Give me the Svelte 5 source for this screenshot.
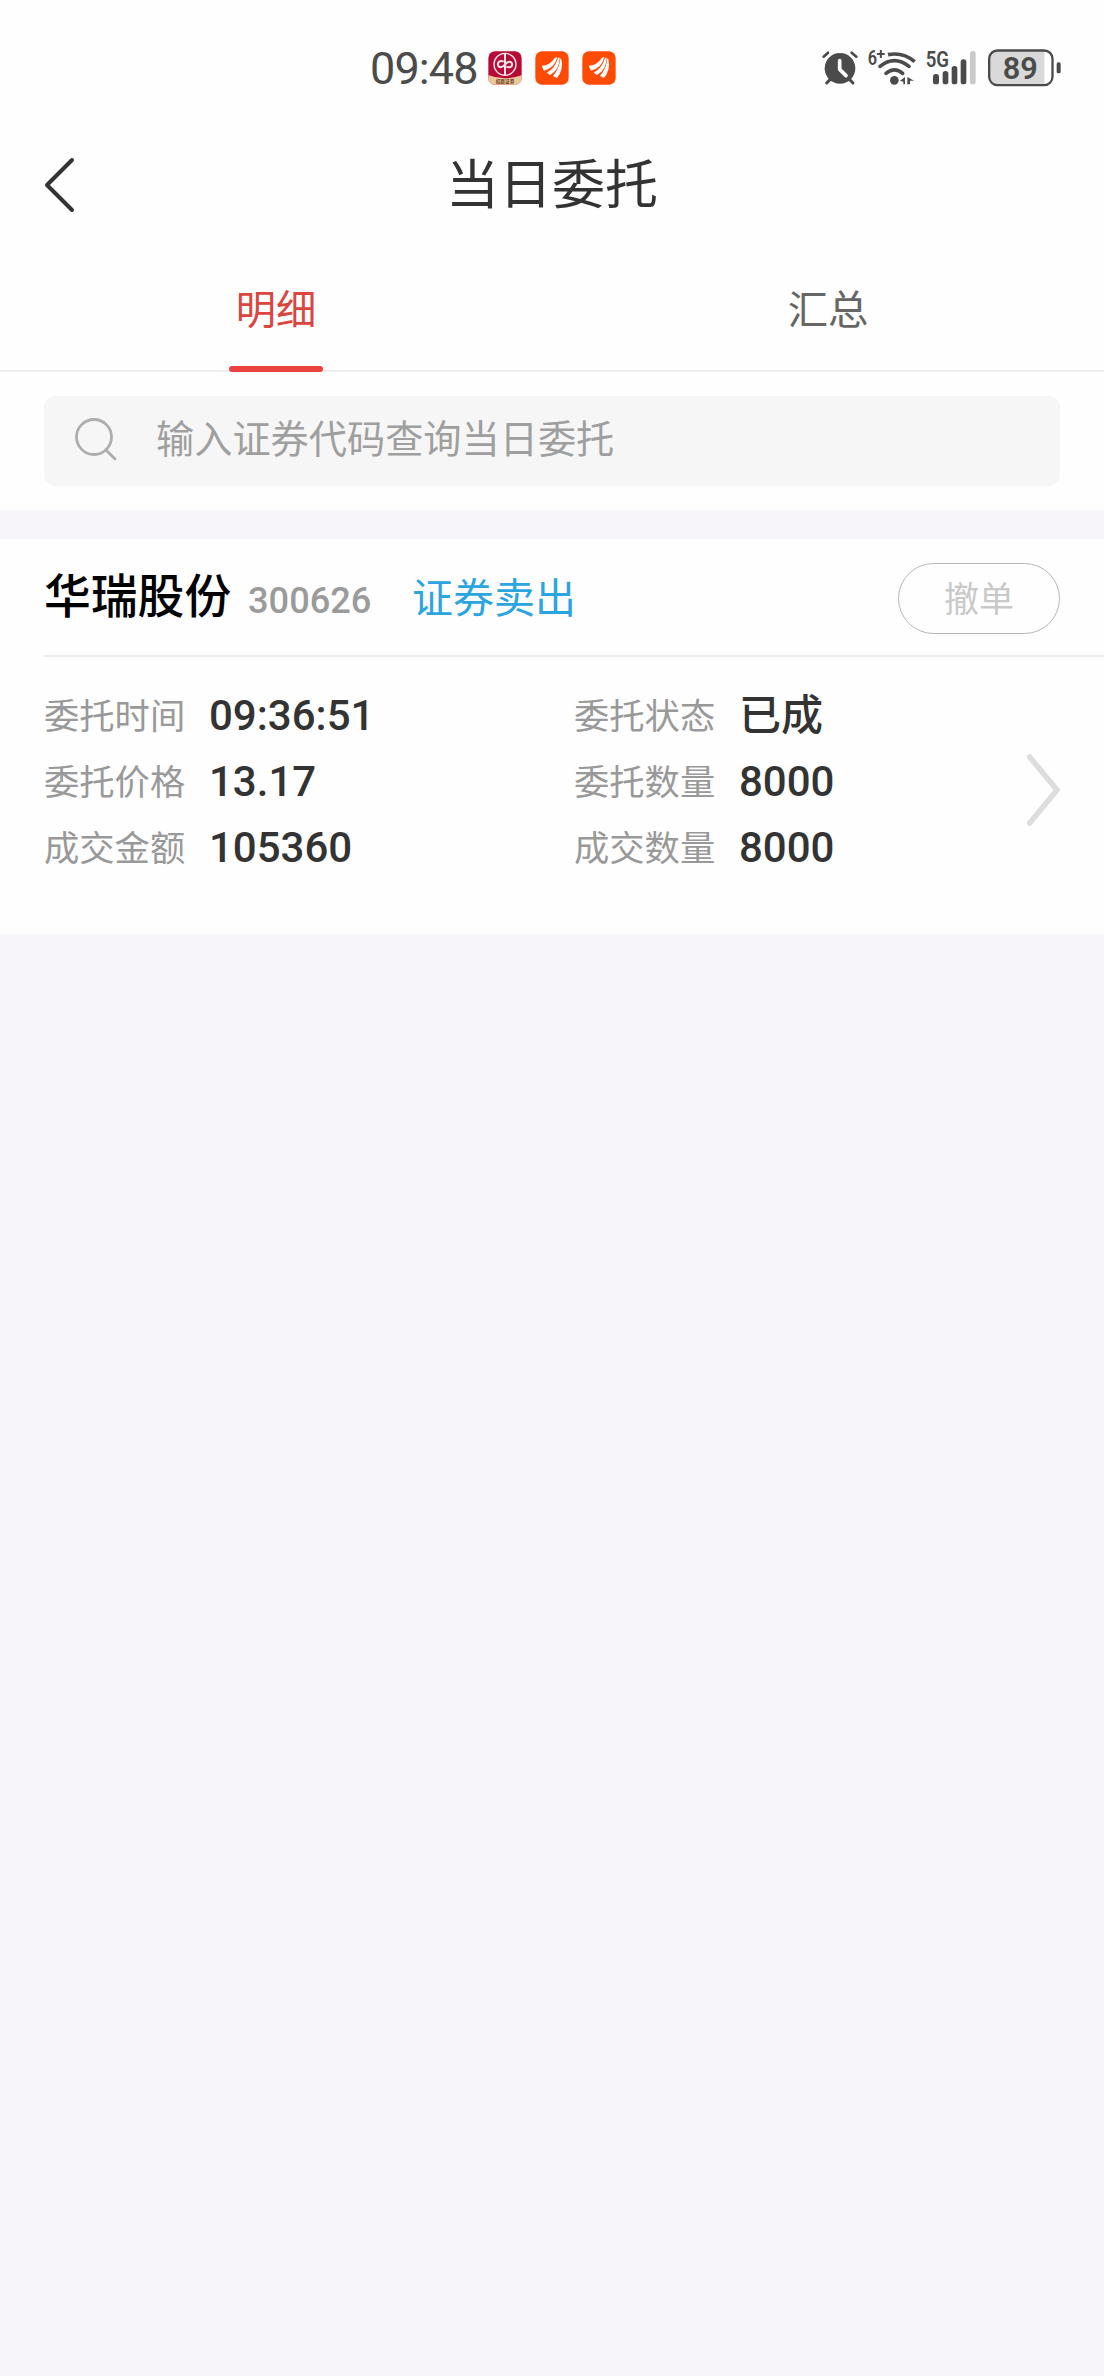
<script>
  const tabs = [
    { label: '明细', active: true },
    { label: '汇总', active: false },
  ];
  const fields = [
    ['委托时间', '09:36:51'],
    ['委托状态', '已成'],
    ['委托价格', '13.17'],
    ['委托数量', '8000'],
    ['成交金额', '105360'],
    ['成交数量', '8000'],
  ];
</script>

{#snippet wingApp()}
  <svg class="app" viewBox="0 0 102 102">
    <rect x="1" y="1" width="100" height="100" rx="20" fill="#fe4a02" />
    <path d="M20 44Q44 44 60 20L67 18Q60 50 27 59Z" fill="#fff" />
    <path d="M35 65Q60 52 69 20L74 20Q74 56 45 72Z" fill="#fff" />
    <path d="M54 75Q74 52 76 22L79 25Q87 55 66 81Z" fill="#fff" />
  </svg>
{/snippet}

<main>
  <div class="status">
    <span class="clock">09:48</span>
    <div class="apps">
      <svg class="app" viewBox="0 0 102 102">
        <defs><clipPath id="tile"><rect x="1" y="1" width="100" height="100" rx="20" /></clipPath></defs>
        <g clip-path="url(#tile)">
          <rect width="102" height="102" fill="#b70a34" />
          <path d="M0 72Q51 92 102 72V102H0Z" fill="#ecc99b" />
          <g fill="none" stroke="#fbe6ee">
            <circle cx="51" cy="40" r="33" stroke-width="4" />
            <path d="M51 8V72" stroke-width="6" />
            <path d="M47 32C36 26 28 34 30 42C32 51 43 51 51 41C59 29 70 30 72 38C74 47 65 52 55 47" stroke-width="6" />
          </g>
        </g>
        <text x="51" y="97" text-anchor="middle" font-size="14" font-weight="700" fill="#6b3a22">招商证券</text>
      </svg>
      {@render wingApp()}
      {@render wingApp()}
    </div>
    <svg class="indicators" viewBox="30 20 726 120">
      <g fill="none" stroke="#4b4b4b" stroke-linecap="round">
        <path d="M38 49L51 37M122 37L136 49" stroke-width="8" />
        <path d="M57 118L47 128M116 118L126 128" stroke-width="9" />
        <path d="M231 43Q276 34 311 64" stroke-width="11" stroke-linecap="butt" />
        <path d="M207 78Q250 44 294 78" stroke-width="11" />
        <path d="M225 99Q250 78 275 99" stroke-width="11" />
      </g>
      <circle cx="87" cy="84" r="46" fill="#4b4b4b" />
      <path d="M86 61V87L105 106" fill="none" stroke="#fff" stroke-width="11" stroke-linecap="round" stroke-linejoin="round" />
      <circle cx="250" cy="120" r="13" fill="#4b4b4b" />
      <path d="M267 121L282 110V132H277V124ZM289 110L309 121H297V132H289Z" fill="#4b4b4b" />
      <text x="170" y="75" font-size="60" font-weight="600" textLength="28" lengthAdjust="spacingAndGlyphs">6</text>
      <path d="M198 41H221M209.500 29V53" stroke="#4b4b4b" stroke-width="6" />
      <text x="344" y="81" font-size="67" font-weight="600" textLength="70" lengthAdjust="spacingAndGlyphs">5G</text>
      <g fill="#4b4b4b">
        <rect x="366" y="101" width="18" height="31" rx="8" />
        <rect x="395" y="92" width="17" height="40" rx="8" />
        <rect x="422" y="77" width="17" height="55" rx="8" />
        <rect x="449" y="57" width="17" height="75" rx="8" />
        <rect x="477" y="32" width="17" height="100" rx="8" fill="#c9c9c9" />
        <rect x="737" y="66" width="12" height="33" rx="5" />
      </g>
      <path d="M556 32H700V134H556Q536 134 536 114V52Q536 32 556 32Z" fill="#d9d9d9" />
      <rect x="534.500" y="30.500" width="190" height="104" rx="25" fill="none" stroke="#4b4b4b" stroke-width="7" />
      <text x="628" y="115" font-size="92" font-weight="600" text-anchor="middle">89</text>
    </svg>
  </div>

  <header>
    <svg class="back" viewBox="0 0 34 58"><path d="M29 4L4 29L29 54" /></svg>
    <h1>当日委托</h1>
  </header>

  <nav>
    {#each tabs as tab}
      <button class="tab" class:active={tab.active}>{tab.label}</button>
    {/each}
  </nav>

  <div class="search-area">
    <label class="search">
      <svg viewBox="0 0 44 44"><circle cx="19" cy="19" r="17.500" /><path d="M31 32L40 41" /></svg>
      <span>输入证券代码查询当日委托</span>
    </label>
  </div>

  <section class="order">
    <div class="order-head">
      <strong>华瑞股份</strong>
      <span class="code">300626</span>
      <span class="side">证券卖出</span>
      <button class="cancel">撤单</button>
    </div>
    <div class="order-body">
      <div class="fields">
        {#each fields as [name, value]}
          <div class="field"><span>{name}</span><b>{value}</b></div>
        {/each}
      </div>
      <svg class="more" viewBox="0 0 33 72"><path d="M1 1L30 36L1 71" /></svg>
    </div>
  </section>
</main>

<style>
  :global(body) { background: #f7f5f9; }
  main {
    width: 1104px;
    min-height: 2376px;
    background: #f7f5f9;
    color: #333;
    font-family: Roboto, "Noto Sans CJK SC", sans-serif;
  }
  svg { display: block; flex: none; }
  button { padding: 0; border: 0; background: none; font: inherit; }
  .status {
    box-sizing: border-box;
    height: 130px;
    padding: 6px 41px 0 370px;
    display: flex;
    align-items: center;
    background: #fefefe;
  }
  .clock { width: 118px; font-size: 45px; letter-spacing: -0.9px; color: #4b4b4b; }
  .apps { display: flex; gap: 13px; }
  .app { width: 34px; height: 34px; }
  .indicators { width: 242px; height: 40px; margin-left: auto; margin-top: -3px; fill: #4b4b4b; }
  header {
    box-sizing: border-box;
    height: 110px;
    padding: 0 43px;
    display: grid;
    grid-template-columns: 34px 1fr 34px;
    align-items: center;
    background: #fefefe;
  }
  .back { width: 34px; height: 58px; fill: none; stroke: #333; stroke-width: 4; stroke-linecap: round; stroke-linejoin: round; }
  h1 { margin: 0; padding-top: 2px; text-align: center; font-size: 53px; line-height: 108px; font-weight: 400; }
  nav {
    height: 130px;
    display: grid;
    grid-template-columns: 1fr 1fr;
    justify-items: center;
    background: #fefefe;
    border-bottom: 2px solid #ededed;
  }
  .tab {
    box-sizing: border-box;
    width: 94px;
    height: 132px;
    padding-top: 41px;
    display: flex;
    flex-direction: column;
    align-items: center;
    justify-content: space-between;
    font-size: 40.300px;
    line-height: 60px;
    color: #666;
  }
  .tab.active { color: #db4540; }
  .tab.active::after { content: ""; width: 94px; height: 6px; border-radius: 3px; background: #ea4340; }
  .search-area { padding: 24px 44px; background: #fefefe; }
  .search {
    height: 90px;
    padding-left: 31px;
    border-radius: 11px;
    display: flex;
    align-items: center;
    gap: 37px;
    background: #f6f6f6;
    color: #9f9f9f;
    font-size: 38.200px;
  }
  .search span { margin-top: -9px; }
  .search svg { width: 44px; height: 44px; margin-top: -2px; fill: none; stroke: #adadad; stroke-width: 2.800; stroke-linecap: round; }
  .order { box-sizing: border-box; height: 395px; margin-top: 29px; background: #fefefe; }
  .order-head {
    box-sizing: border-box;
    height: 118px;
    margin-left: 44px;
    padding-right: 44px;
    display: flex;
    align-items: center;
    border-bottom: 2px solid #ececec;
  }
  .order-head strong { width: 204px; margin-top: -9px; font-size: 46.800px; font-weight: 500; color: #000; }
  .code { width: 164px; padding-top: 7px; font-size: 36.200px; font-weight: 500; color: #9b9b9b; }
  .side { margin-top: -4px; font-size: 41px; color: #2ba5e0; }
  .cancel {
    box-sizing: border-box;
    width: 162px;
    height: 71px;
    margin-left: auto;
    margin-top: 2px;
    padding-bottom: 4px;
    border: 1px solid #b8b8b8;
    border-radius: 36px;
    font-size: 35px;
    color: #c9c9c9;
  }
  .order-body { display: flex; padding: 26px 44px 0 44px; justify-content: space-between; }
  .fields { display: grid; grid-template-columns: 530px 400px; grid-auto-rows: 66px; }
  .field { display: flex; align-items: center; line-height: 66px; }
  .field span { width: 165px; padding-top: 1px; font-size: 35.300px; color: #999; }
  .field b { font-size: 42px; font-weight: 500; color: #333; }
  .more { width: 33px; height: 72px; margin-top: 71px; fill: none; stroke: #ddd; stroke-width: 5.500; }
</style>
